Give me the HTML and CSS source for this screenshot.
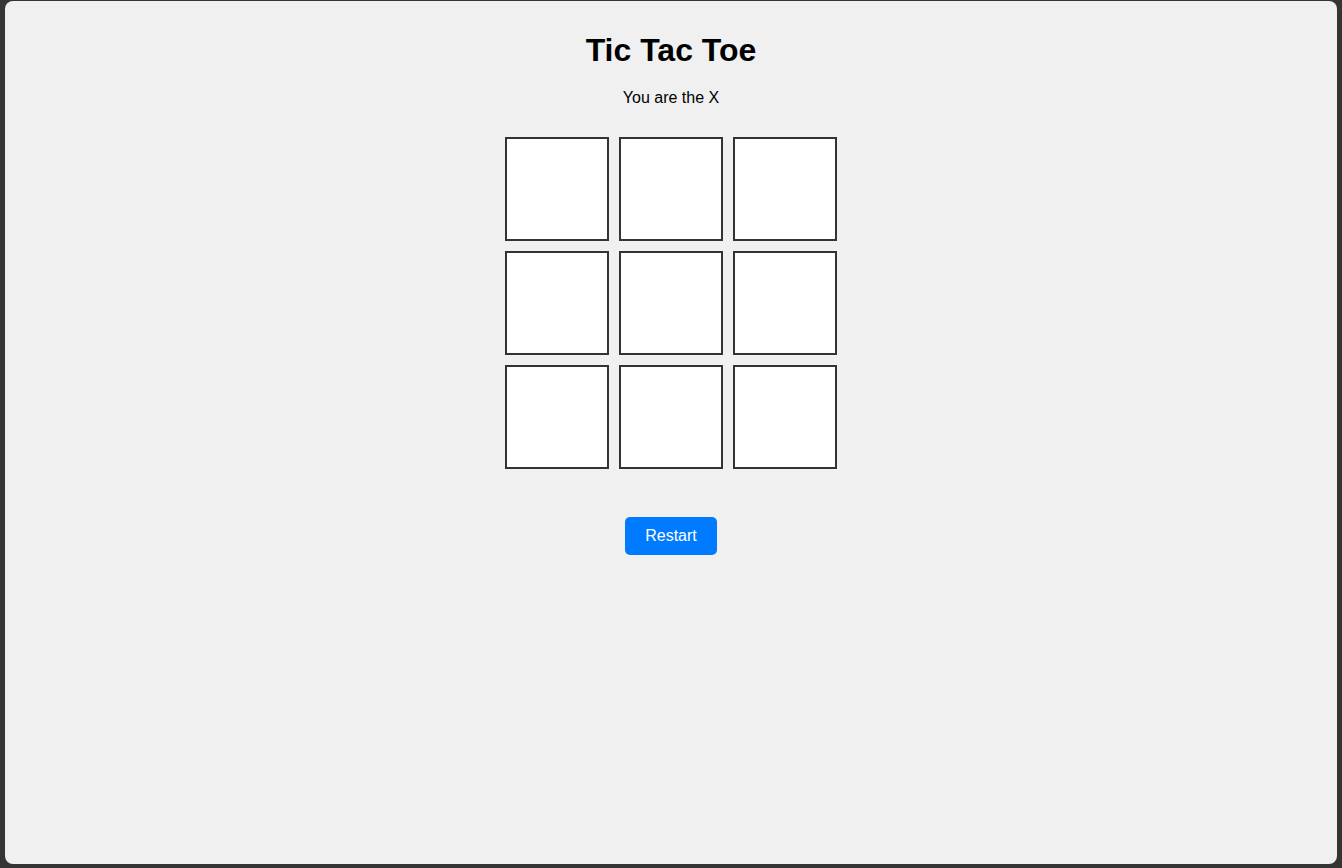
FILE: index.html
```html
<!DOCTYPE html>
<html lang="en">
<head>
<meta charset="utf-8">
<title>Tic Tac Toe</title>
<link rel="stylesheet" href="styles.css">
</head>
<body>
<div class="window">
  <h1 class="title">Tic Tac Toe</h1>
  <p class="status">You are the X</p>
  <div class="board">
    <div class="cell"></div>
    <div class="cell"></div>
    <div class="cell"></div>
    <div class="cell"></div>
    <div class="cell"></div>
    <div class="cell"></div>
    <div class="cell"></div>
    <div class="cell"></div>
    <div class="cell"></div>
  </div>
  <button class="restart" type="button">Restart</button>
</div>
</body>
</html>
```

FILE: styles.css
```css
html, body {
  margin: 0;
  padding: 0;
  height: 100%;
}
body {
  background: #353535;
  font-family: "Liberation Sans", Arial, sans-serif;
  color: #000;
  box-sizing: border-box;
  padding: 1px 5px 4px 5px;
}
.window {
  height: 100%;
  box-sizing: border-box;
  background: #f0f0f0;
  border-radius: 8px;
  padding-top: 31px;
  display: flex;
  flex-direction: column;
  align-items: center;
}
.title {
  margin: 0;
  font-size: 32px;
  line-height: 37px;
  font-weight: bold;
}
.status {
  margin: 20px 0 0 0;
  font-size: 16px;
  line-height: 18px;
}
.board {
  margin-top: 30px;
  display: grid;
  grid-template-columns: repeat(3, 104px);
  grid-auto-rows: 104px;
  gap: 10px;
}
.cell {
  box-sizing: border-box;
  background: #fff;
  border: 2px solid #333;
}
.restart {
  margin-top: 48px;
  background: #007bff;
  color: #fff;
  border: none;
  border-radius: 5px;
  padding: 10px 20px;
  font-family: "Liberation Sans", Arial, sans-serif;
  font-size: 16px;
  line-height: 18px;
  cursor: pointer;
}
```
